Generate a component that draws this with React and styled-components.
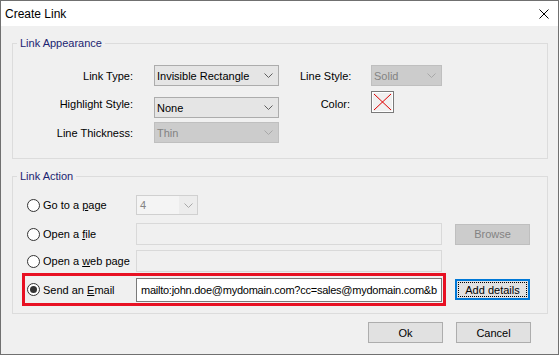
import styled, { createGlobalStyle } from "styled-components";

const GlobalStyle = createGlobalStyle`
  html, body {
    margin: 0;
    padding: 0;
    background: #ffffff;
  }
  body {
    font-family: "Liberation Sans", Arial, sans-serif;
    font-size: 11px;
    color: #000000;
  }
`;

const Window = styled.div`
  width: 559px;
  height: 355px;
  box-sizing: border-box;
  border: 1px solid #707070;
  background: #f0f0f0;
  display: flex;
  flex-direction: column;
`;

const TitleBar = styled.div`
  height: 25px;
  flex: none;
  background: #ffffff;
  display: flex;
  align-items: center;
  justify-content: space-between;
  padding: 0 9px 0 4px;
`;

const Title = styled.span`
  font-size: 12px;
`;

const CloseIcon = styled.svg`
  width: 10px;
  height: 10px;
  display: block;
`;

const Group = styled.fieldset`
  margin: 10px 10px 0 11px;
  padding: 0;
  border: 1px solid #dcdcdc;
  min-width: 0;
`;

const Legend = styled.legend`
  margin-left: 4px;
  padding: 0 3px;
  line-height: 14px;
  color: #1c2470;
`;

const AppearanceGrid = styled.div`
  display: grid;
  grid-template-columns: 120px 125px 50px 71px;
  grid-template-rows: 21px 28px 21px;
  column-gap: 21px;
  row-gap: 4px;
  padding: 15px 0 15px 0;
  align-items: center;
`;

const FieldLabel = styled.span`
  text-align: right;
  white-space: nowrap;
`;

const Select = styled.div`
  height: 21px;
  box-sizing: border-box;
  border: 1px solid ${(p) => (p.$disabled ? "#bfbfbf" : "#acacac")};
  background: ${(p) => (p.$disabled ? "#cccccc" : "#e5e5e5")};
  color: ${(p) => (p.$disabled ? "#838383" : "#000000")};
  display: flex;
  align-items: center;
  justify-content: space-between;
  padding: 0 5px 0 2px;
  align-self: ${(p) => p.$align || "center"};
  white-space: nowrap;
`;

const Chevron = ({ color = "#5f5f5f" }) => (
  <svg width="9" height="5" viewBox="0 0 9 5">
    <polyline points="0.5,0.5 4.5,4.5 8.5,0.5" fill="none" stroke={color} strokeWidth="1" />
  </svg>
);

const Swatch = styled.div`
  width: 23px;
  height: 22px;
  box-sizing: border-box;
  border: 1px solid #7a7a7a;
  background: #ffffff;
  padding: 1px;
  align-self: start;
  margin-top: 1px;
`;

const SwatchFill = styled.svg`
  display: block;
  width: 19px;
  height: 18px;
  background: #f0f0f0;
`;

const ActionBody = styled.div`
  padding: 12px 0 7px 0;
  display: flex;
  flex-direction: column;
`;

const ActionRow = styled.div`
  height: ${(p) => p.$h}px;
  margin-bottom: ${(p) => p.$gap || 0}px;
  padding-left: 14px;
  display: flex;
  align-items: center;
`;

const EmailRow = styled.div`
  padding-left: 9px;
  display: flex;
  align-items: center;
`;

const Highlight = styled.div`
  height: 33px;
  box-sizing: border-box;
  border: 3px solid #e81123;
  padding: 0 1px 0 2px;
  display: flex;
  align-items: center;
`;

const RadioLabel = styled.label`
  width: 109px;
  flex: none;
  display: flex;
  align-items: center;
  gap: 3px;
  white-space: nowrap;
`;

const RadioDot = styled.span`
  width: 13px;
  height: 13px;
  box-sizing: border-box;
  border: 1px solid #333333;
  border-radius: 50%;
  background: #ffffff;
  display: flex;
  align-items: center;
  justify-content: center;
  &::after {
    content: "";
    width: 7px;
    height: 7px;
    border-radius: 50%;
    background: ${(p) => (p.$checked ? "#333333" : "transparent")};
  }
`;

const Combo = styled.div`
  width: 62px;
  height: 20px;
  box-sizing: border-box;
  border: 1px solid #d0d0d0;
  background: #ececec;
  display: flex;
  align-items: center;
  color: #838383;
`;

const ComboText = styled.span`
  width: 42px;
  height: 100%;
  background: #f4f4f4;
  display: flex;
  align-items: center;
  padding-left: 3px;
  box-sizing: border-box;
`;

const ComboArrow = styled.span`
  flex: 1;
  display: flex;
  justify-content: center;
`;

const TextField = styled.div`
  width: 306px;
  height: ${(p) => p.$h || 22}px;
  box-sizing: border-box;
  border: 1px solid ${(p) => (p.$disabled ? "#d9d9d9" : "#7a7a7a")};
  background: ${(p) => (p.$disabled ? "#f0f0f0" : "#ffffff")};
  display: flex;
  align-items: center;
  padding-left: 4px;
  overflow: hidden;
  white-space: nowrap;
  letter-spacing: -0.25px;
`;

const Button = styled.button`
  position: relative;
  width: 75px;
  height: 21px;
  box-sizing: border-box;
  margin: 0 0 0 ${(p) => p.$ml || 0}px;
  padding: 0;
  font-family: inherit;
  font-size: 11px;
  color: ${(p) => (p.disabled ? "#838383" : "#000000")};
  background: ${(p) => (p.disabled ? "#cccccc" : "#e1e1e1")};
  border: ${(p) =>
    p.$focused ? "2px solid #0078d7" : p.disabled ? "1px solid #bfbfbf" : "1px solid #adadad"};
  ${(p) =>
    p.$focused &&
    `&::after {
      content: "";
      position: absolute;
      inset: 1px;
      border: 1px dotted #000000;
    }`}
`;

const Footer = styled.div`
  margin-top: 8px;
  padding-right: 27px;
  display: flex;
  justify-content: flex-end;
  gap: 13px;
`;

const App = () => {
  return (
    <>
      <GlobalStyle />
      <Window>
        <TitleBar>
          <Title>Create Link</Title>
          <CloseIcon viewBox="0 0 10 10">
            <path d="M0.5 0.5 L9.5 9.5 M9.5 0.5 L0.5 9.5" stroke="#000" strokeWidth="1" />
          </CloseIcon>
        </TitleBar>

        <Group>
          <Legend>Link Appearance</Legend>
          <AppearanceGrid>
            <FieldLabel>Link Type:</FieldLabel>
            <Select>
              Invisible Rectangle
              <Chevron />
            </Select>
            <FieldLabel>Line Style:</FieldLabel>
            <Select $disabled>
              Solid
              <Chevron color="#a8a8a8" />
            </Select>

            <FieldLabel>Highlight Style:</FieldLabel>
            <Select $align="end">
              None
              <Chevron />
            </Select>
            <FieldLabel>Color:</FieldLabel>
            <Swatch>
              <SwatchFill viewBox="0 0 19 18">
                <path d="M1 1 L18 17 M18 1 L1 17" stroke="#e00000" strokeWidth="1" />
              </SwatchFill>
            </Swatch>

            <FieldLabel>Line Thickness:</FieldLabel>
            <Select $disabled>
              Thin
              <Chevron color="#a8a8a8" />
            </Select>
          </AppearanceGrid>
        </Group>

        <Group>
          <Legend>Link Action</Legend>
          <ActionBody>
            <ActionRow $h={20} $gap={8}>
              <RadioLabel>
                <RadioDot />
                <span>
                  Go to a <u>p</u>age
                </span>
              </RadioLabel>
              <Combo>
                <ComboText>4</ComboText>
                <ComboArrow>
                  <Chevron color="#a8a8a8" />
                </ComboArrow>
              </Combo>
            </ActionRow>

            <ActionRow $h={22} $gap={5}>
              <RadioLabel>
                <RadioDot />
                <span>
                  Open a <u>f</u>ile
                </span>
              </RadioLabel>
              <TextField $disabled />
              <Button disabled $ml={13}>
                Browse
              </Button>
            </ActionRow>

            <ActionRow $h={22} $gap={1}>
              <RadioLabel>
                <RadioDot />
                <span>
                  Open a <u>w</u>eb page
                </span>
              </RadioLabel>
              <TextField $disabled />
            </ActionRow>

            <EmailRow>
              <Highlight>
                <RadioLabel>
                  <RadioDot $checked />
                  <span>
                    Send an <u>E</u>mail
                  </span>
                </RadioLabel>
                <TextField $h={24}>mailto:john.doe@mydomain.com?cc=sales@mydomain.com&amp;b</TextField>
              </Highlight>
              <Button $focused $ml={9}>
                Add details
              </Button>
            </EmailRow>
          </ActionBody>
        </Group>

        <Footer>
          <Button>Ok</Button>
          <Button>Cancel</Button>
        </Footer>
      </Window>
    </>
  );
};

export default App;
